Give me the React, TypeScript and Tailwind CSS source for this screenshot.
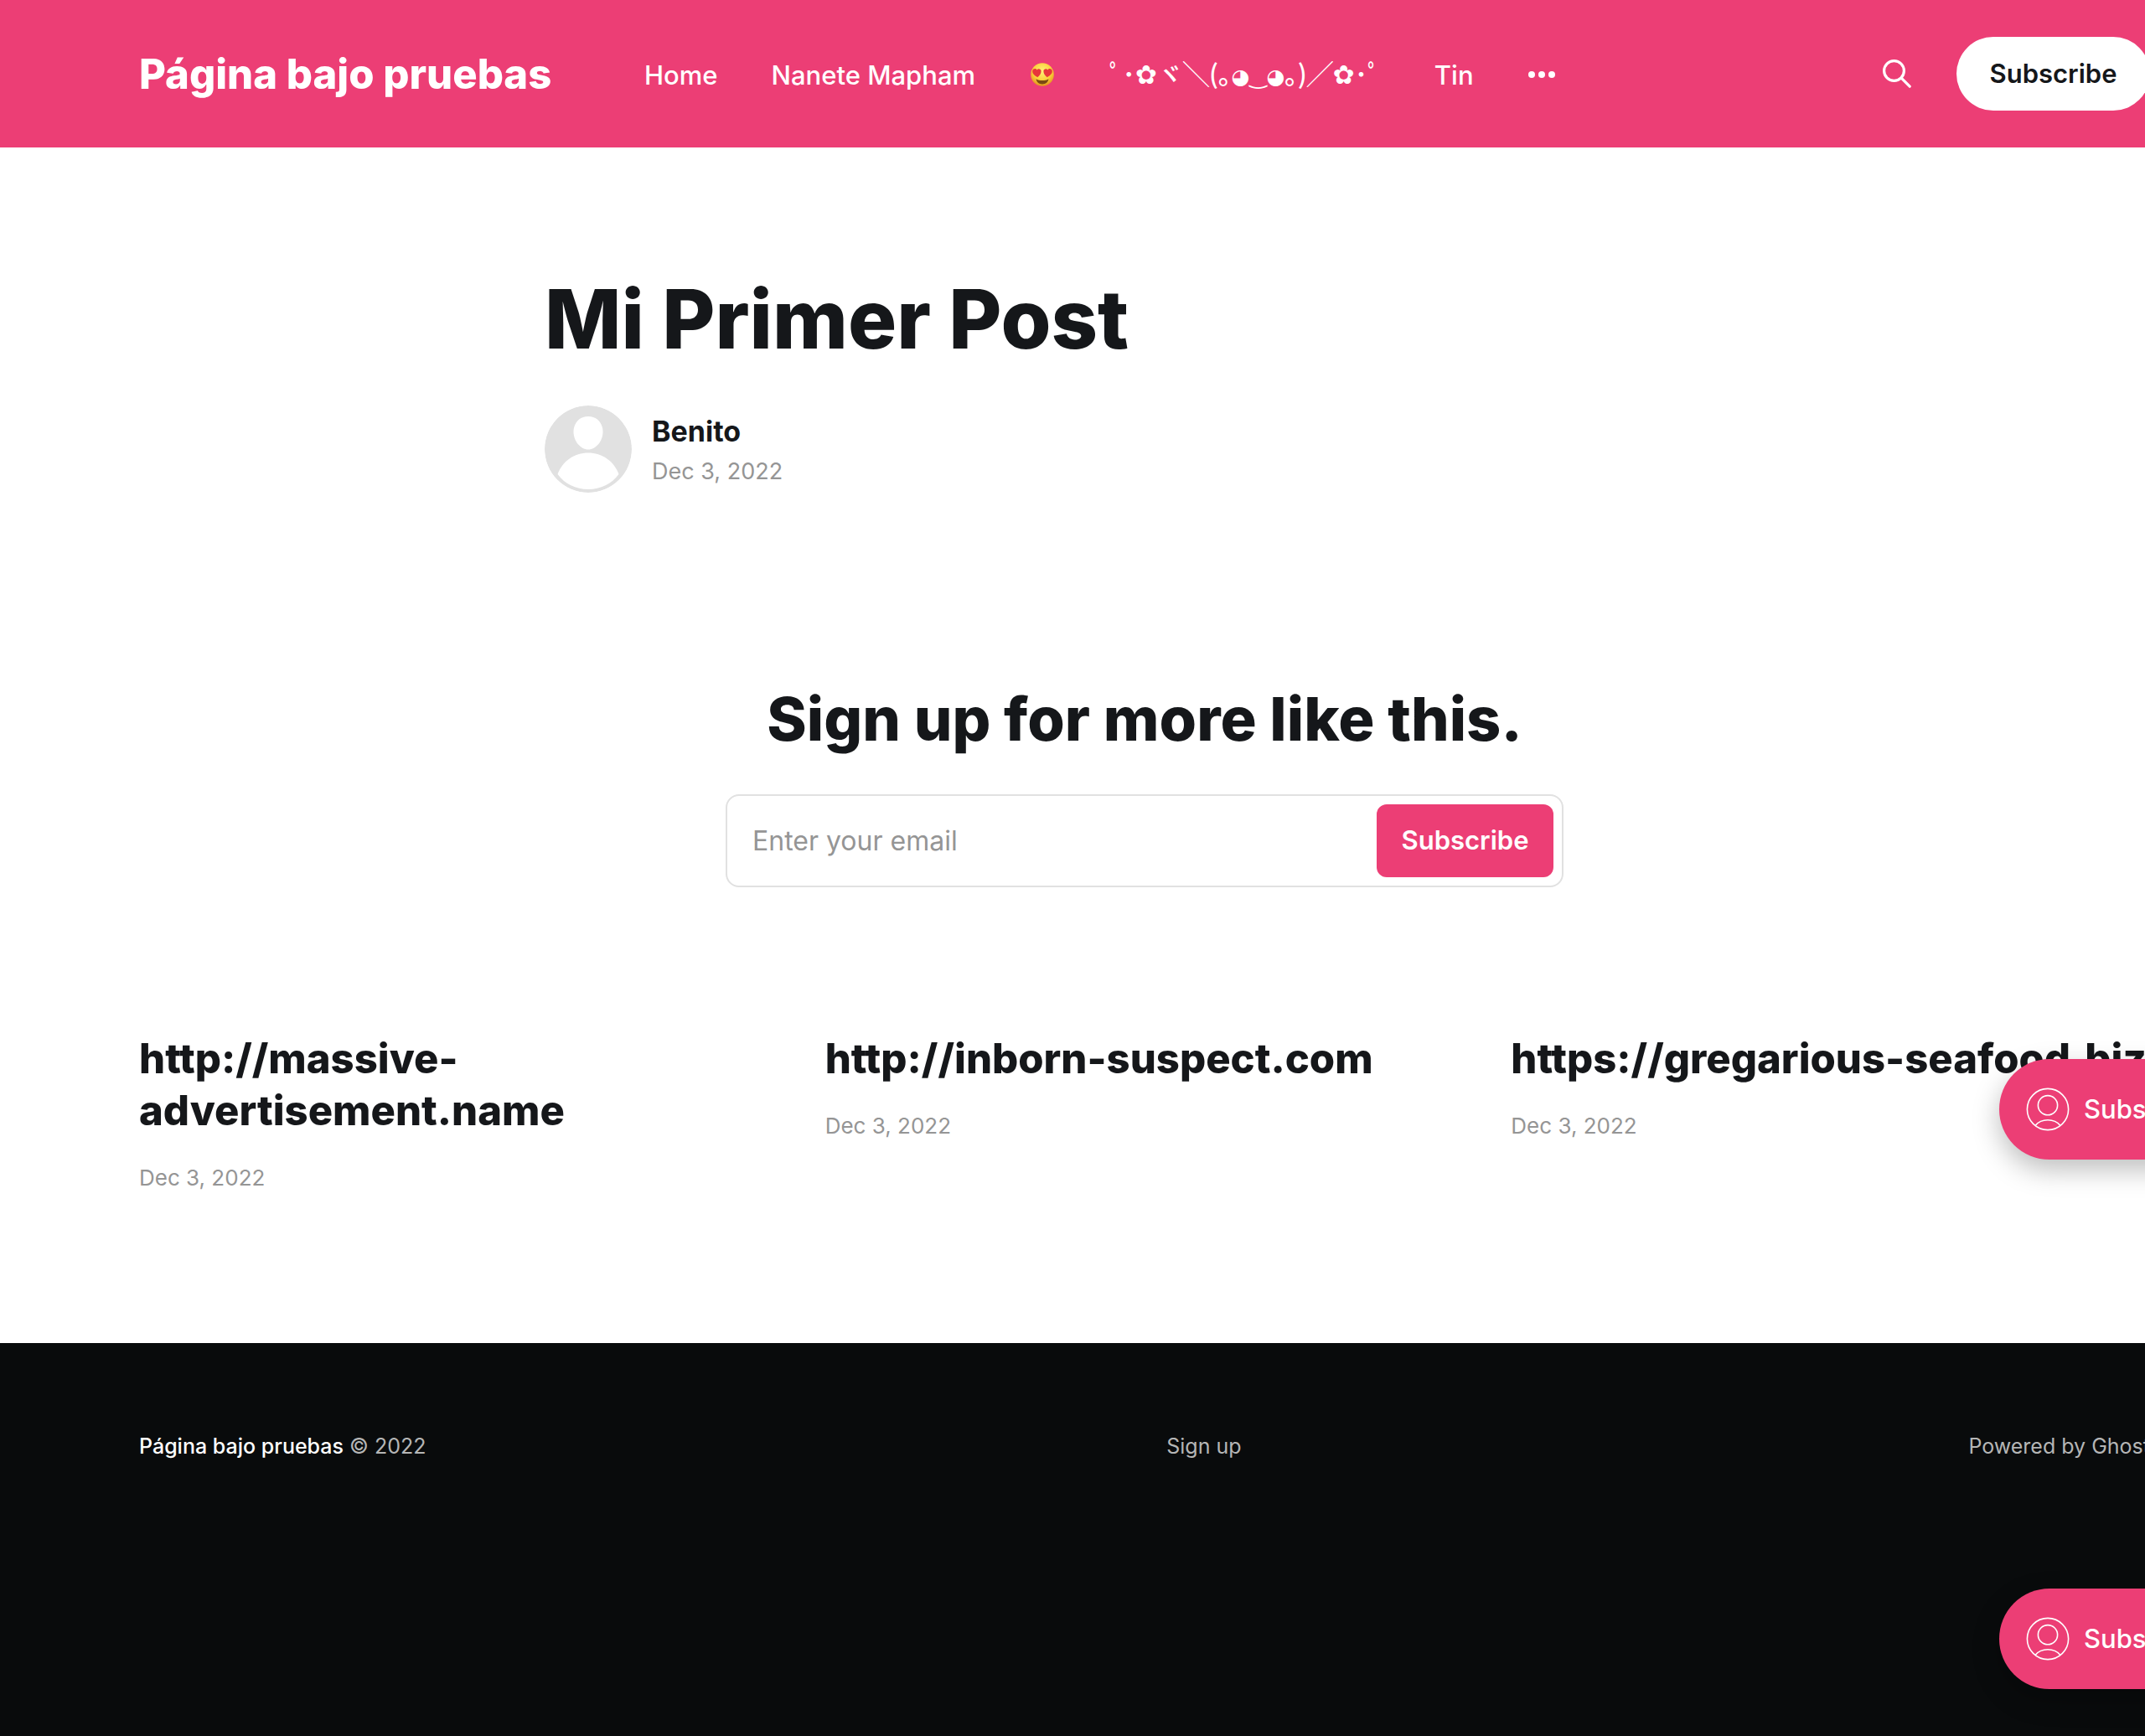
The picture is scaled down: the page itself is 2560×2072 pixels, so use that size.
import React from "react";

const posts = [
  { title: "http://massive-advertisement.name", date: "Dec 3, 2022" },
  { title: "http://inborn-suspect.com", date: "Dec 3, 2022" },
  { title: "https://gregarious-seafood.biz", date: "Dec 3, 2022" },
];

function HeartEyes() {
  return (
    <svg viewBox="0 0 28 28" className="h-7 w-8" role="img" aria-label="Smiling face with heart eyes">
      <defs>
        <radialGradient id="face" cx="50%" cy="35%" r="65%">
          <stop offset="0%" stopColor="#fff27a" />
          <stop offset="60%" stopColor="#fbd03c" />
          <stop offset="100%" stopColor="#e2951d" />
        </radialGradient>
      </defs>
      <circle cx="14" cy="14" r="13.8" fill="url(#face)" />
      <path d="M8.2 17.2C4.3 15.2 1.6 12.4 2.3 9.3c.7-2.6 4-3 5.2-.8 1.7-2.2 5-1.3 5.1 1.3.1 3-2 5.6-4.4 7.4z" fill="#e8363b" />
      <path d="M19.8 17.2c3.9-2 6.6-4.8 5.9-7.9-.7-2.6-4-3-5.2-.8-1.7-2.2-5-1.3-5.1 1.3-.1 3 2 5.6 4.4 7.4z" fill="#e8363b" />
      <path d="M6.6 19.2c2.2 1.4 4.8 1.9 7.4 1.9s5.2-.5 7.4-1.9c-.3 3.7-3.4 6.2-7.4 6.2s-7.1-2.5-7.4-6.2z" fill="#7a4a12" />
    </svg>
  );
}

function Flower() {
  return <span className="font-['DejaVu_Sans',sans-serif] font-bold">✿</span>;
}

function Kaomoji() {
  return (
    <a href="#" className="font-['Noto_Sans_CJK_JP','DejaVu_Sans',sans-serif] leading-[31px]">
      ﾟ･<Flower />ヾ╲(｡
      <span className="font-['DejaVu_Sans',sans-serif] text-[25px]">◕‿◕</span>
      ｡)╱<Flower />･ﾟ
    </a>
  );
}

function SearchIcon() {
  return (
    <svg viewBox="0 0 34 34" className="size-[34px]" fill="none" stroke="currentColor" strokeWidth="3.2" strokeLinecap="round" aria-hidden="true">
      <circle cx="13.5" cy="13.5" r="11.9" />
      <path d="M22.2 22.2 32.2 32.2" />
    </svg>
  );
}

function Avatar() {
  return (
    <svg viewBox="0 0 104 104" className="size-[104px] rounded-full" aria-hidden="true">
      <circle cx="52" cy="52" r="52" fill="#e1e1e1" />
      <path d="M52 13c10.5 0 17.5 8 17.5 18.5C69.5 42 61.5 52.5 52 52.5S34.5 42 34.5 31.5C34.5 21 41.5 13 52 13z" fill="#fff" />
      <path d="M15.5 82C21 66.5 35.5 56.5 52 56.5S83 66.5 88.5 82C80 93.5 67 100 52 100S24 93.5 15.5 82z" fill="#fff" />
    </svg>
  );
}

function PortalButton() {
  return (
    <button
      type="button"
      className="flex h-[120px] w-[280px] items-center gap-4 rounded-full bg-[#ec3e75] pl-[31px] text-[31px] font-medium text-white shadow-[0_12px_32px_rgba(0,0,0,0.26)]"
    >
      <svg viewBox="0 0 54 54" className="size-[54px]" fill="none" stroke="currentColor" strokeWidth="1.6" aria-hidden="true">
        <circle cx="27" cy="27" r="24.6" />
        <circle cx="27" cy="22.2" r="11.6" />
        <path d="M12 46.4C15.5 42.3 21 39.8 27 39.8S38.5 42.3 42 46.4" />
      </svg>
      Subscribe
    </button>
  );
}

export default function App() {
  return (
    <div className="relative min-h-screen overflow-hidden bg-white font-['Inter','Noto_Sans_CJK_JP','DejaVu_Sans',sans-serif] text-[#15171a]">
      <header className="bg-[#ec3e75] text-white">
        <div className="mr-[-6px] ml-[166px] flex h-[176px] items-center">
          <a href="#" className="w-[603px] shrink-0 text-[49px] leading-none font-extrabold whitespace-nowrap">
            Página bajo pruebas
          </a>
          <nav className="flex items-center gap-16 pt-0.5 text-[31px] leading-none font-medium whitespace-nowrap">
            <a href="#">Home</a>
            <a href="#">Nanete Mapham</a>
            <a href="#"><HeartEyes /></a>
            <Kaomoji />
            <a href="#">Tin</a>
            <button type="button" aria-label="More">
              <svg viewBox="0 0 34 34" className="size-[34px]" fill="currentColor" aria-hidden="true">
                <circle cx="5" cy="17" r="4" />
                <circle cx="17" cy="17" r="4" />
                <circle cx="29" cy="17" r="4" />
              </svg>
            </button>
          </nav>
          <div className="ml-auto flex items-center gap-[54px]">
            <button type="button" aria-label="Search"><SearchIcon /></button>
            <a href="#" className="flex h-[88px] w-[231px] items-center justify-center rounded-full bg-white text-[31px] font-semibold text-[#15171a]">
              Subscribe
            </a>
          </div>
        </div>
      </header>

      <main className="mr-[-6px] ml-[166px]">
        <article className="mx-auto max-w-[1432px] pt-[150px]">
          <h1 className="text-[97px] leading-[110px] font-extrabold">Mi Primer Post</h1>
          <div className="mt-12 flex items-center gap-6">
            <Avatar />
            <div className="pt-1.5">
              <h4 className="text-[34px] leading-[48px] font-bold"><a href="#">Benito</a></h4>
              <time className="block text-[27px] leading-[48px] text-[#959595]">Dec 3, 2022</time>
            </div>
          </div>
        </article>

        <section className="mx-auto mt-[228px] flex max-w-[1000px] flex-col items-center">
          <h2 className="text-[72px] leading-[84px] font-extrabold whitespace-nowrap">Sign up for more like this.</h2>
          <form className="mt-12 flex h-[111px] w-full items-center rounded-2xl border-2 border-[#e1e1e1] pr-2.5 pl-[30px]">
            <input type="email" aria-label="Email" placeholder="Enter your email" className="min-w-0 flex-1 text-[32px] outline-none placeholder:text-[#959595]" />
            <button type="button" className="h-[87px] w-[211px] rounded-xl bg-[#ec3e75] text-[31px] font-semibold text-white">Subscribe</button>
          </form>
        </section>

        <section className="mt-[174px] grid grid-cols-3 gap-14 pb-44">
          {posts.map((post) => (
            <article key={post.title}>
              <h2 className="text-[49px] leading-[62px] font-extrabold"><a href="#">{post.title}</a></h2>
              <time className="mt-7 block text-[26px] leading-[42px] text-[#959595]">{post.date}</time>
            </article>
          ))}
        </section>
      </main>

      <footer className="h-[470px] bg-[#090b0c] pt-[101px] text-[25px] leading-[44px] text-[#b5b6b6]">
        <div className="mr-[-6px] ml-[166px] flex justify-between">
          <p><a href="#" className="font-medium text-white">Página bajo pruebas</a> © 2022</p>
          <a href="#" className="pl-4">Sign up</a>
          <a href="#">Powered by Ghost</a>
        </div>
      </footer>

      <div className="absolute top-[1264px] right-[-106px] flex flex-col gap-[512px]">
        <PortalButton />
        <PortalButton />
      </div>
    </div>
  );
}
